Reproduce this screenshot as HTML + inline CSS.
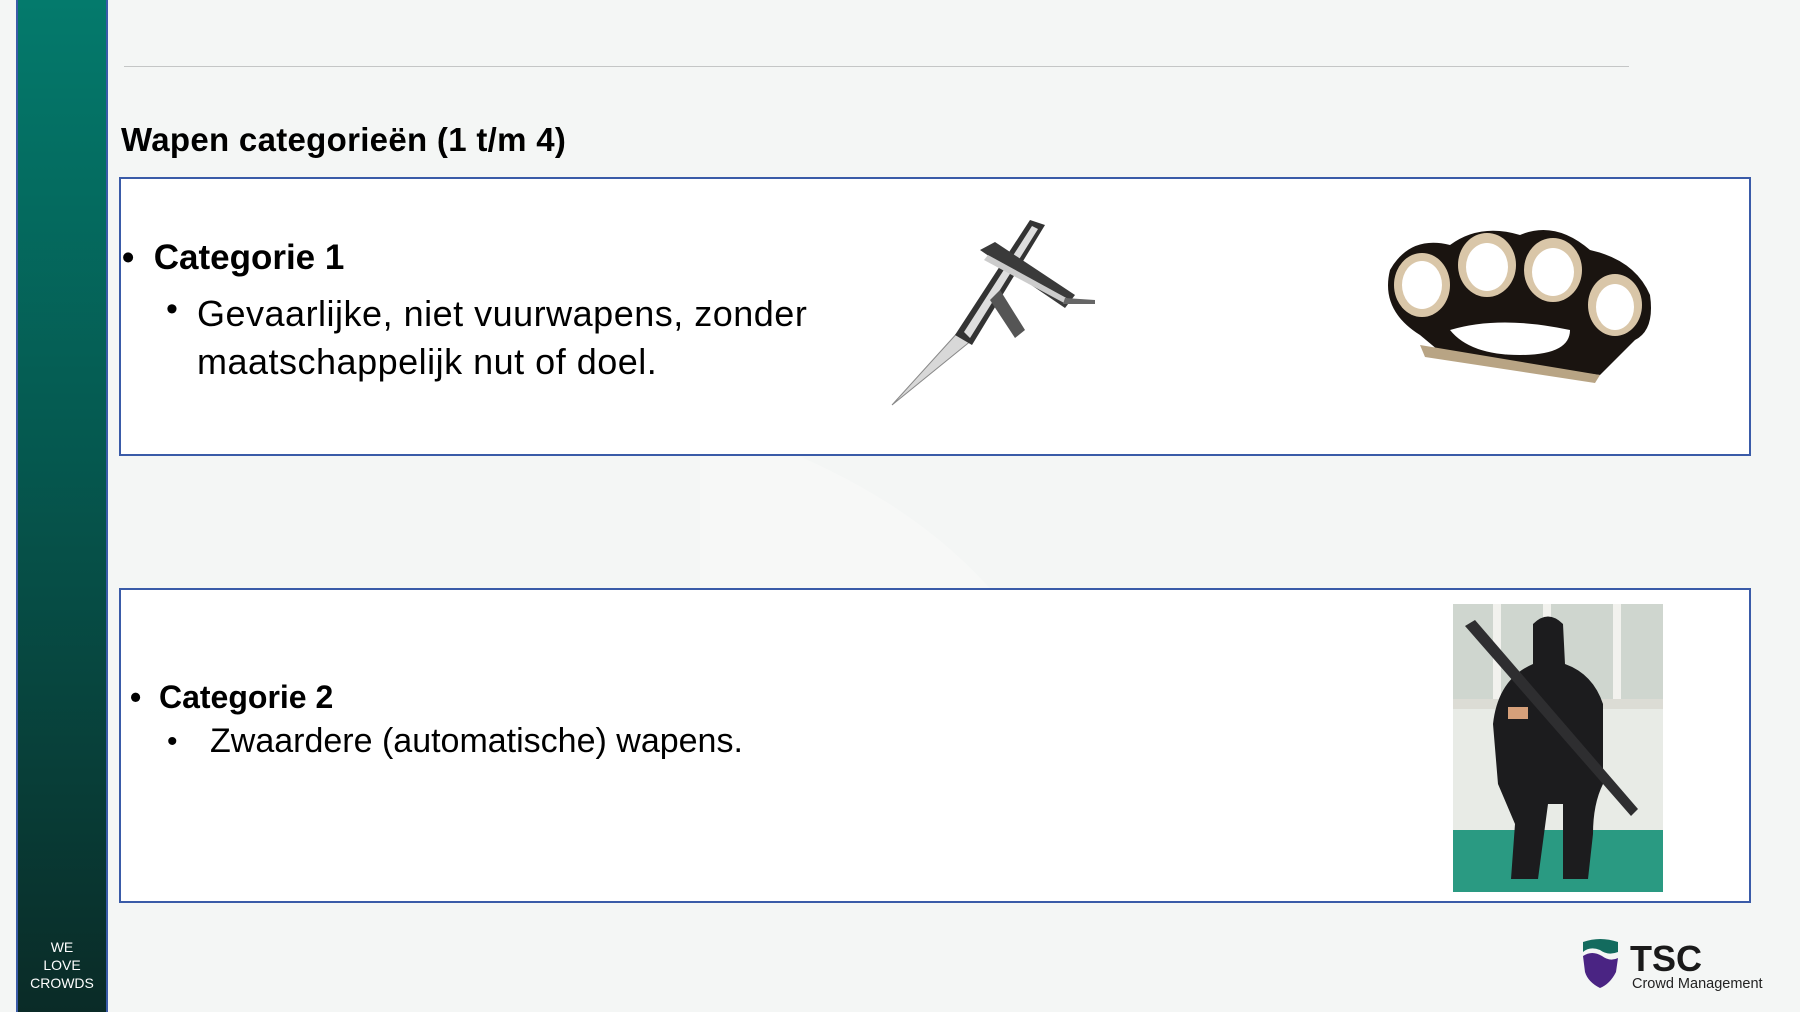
<!DOCTYPE html>
<html><head><meta charset="utf-8"><style>
*{margin:0;padding:0;box-sizing:border-box}
body{width:1800px;height:1012px;overflow:hidden;background:#f4f6f5;position:relative;font-family:"Liberation Sans",sans-serif;color:#000}
.abs{position:absolute}
.bar{left:16px;top:0;width:92px;height:1012px;background:linear-gradient(#047a6c,#05584f 45%,#0a2b27 100%);border-left:2px solid #3a5ba8;border-right:2px solid #3a5ba8}
.wlc{left:16px;width:92px;top:938px;color:#fff;font-size:14px;line-height:18px;text-align:center}
.box{left:119px;width:1632px;border:2px solid #3a5ba8;background:#fff}
.t{white-space:nowrap;line-height:1}
</style></head><body>
<svg class="abs" style="left:0;top:0" width="1800" height="1012"><path d="M700 420 Q900 480 1000 600 L700 600Z" fill="#f7f8f7"/></svg>
<div class="abs bar"></div>
<div class="abs wlc">WE<br>LOVE<br>CROWDS</div>
<div class="abs" style="left:124px;top:66px;width:1505px;height:1px;background:#c4c6c6"></div>
<div class="abs t" style="left:121px;top:123px;font-size:33px;font-weight:bold;letter-spacing:0.3px">Wapen categorieën (1 t/m 4)</div>
<div class="abs box" style="top:177px;height:279px"></div>
<div class="abs box" style="top:588px;height:315px"></div>

<div class="abs t" style="left:122px;top:240px;font-size:35px;font-weight:bold">•&nbsp;&nbsp;Categorie 1</div>
<div class="abs t" style="left:166px;top:292px;font-size:34px">•</div>
<div class="abs t" style="left:197px;top:290px;font-size:36px;letter-spacing:0.5px;line-height:48px">Gevaarlijke, niet vuurwapens, zonder<br>maatschappelijk nut of doel.</div>

<div class="abs t" style="left:130px;top:681px;font-size:32px;font-weight:bold">•&nbsp;&nbsp;Categorie 2</div>
<div class="abs t" style="left:167px;top:727px;font-size:30px">•</div>
<div class="abs t" style="left:210px;top:724px;font-size:34px">Zwaardere (automatische) wapens.</div>

<!-- knife -->
<svg class="abs" style="left:880px;top:200px" width="320" height="220">
<path d="M12 205 L80 130 L92 140 Z" fill="#d8d8d8" stroke="#888" stroke-width="1"/>
<path d="M75 135 L150 20 L165 25 L92 145 Z" fill="#333"/>
<path d="M84 132 L152 26 L158 29 L90 138 Z" fill="#ddd"/>
<path d="M100 50 L115 42 L195 95 L185 108 Z" fill="#3a3a3a"/>
<path d="M108 55 L190 100 L186 104 L104 60 Z" fill="#ccc"/>
<path d="M120 90 L145 130 L135 138 L110 100Z" fill="#555"/>
<path d="M185 98 L215 100 L215 104 L183 104Z" fill="#666"/>
</svg>
<!-- knuckles -->
<svg class="abs" style="left:1370px;top:215px" width="300" height="180">
<path d="M20 55 Q40 20 80 30 Q110 8 150 20 Q185 5 220 35 Q265 45 280 80 Q285 115 265 125 L230 160 Q150 150 80 145 L50 120 Q10 95 20 55Z" fill="#1a1410"/>
<ellipse cx="52" cy="70" rx="28" ry="32" fill="#d9c6a8"/><ellipse cx="52" cy="70" rx="20" ry="24" fill="#fff"/>
<ellipse cx="117" cy="50" rx="29" ry="32" fill="#d9c6a8"/><ellipse cx="117" cy="52" rx="21" ry="24" fill="#fff"/>
<ellipse cx="183" cy="55" rx="29" ry="32" fill="#d9c6a8"/><ellipse cx="183" cy="57" rx="21" ry="24" fill="#fff"/>
<ellipse cx="245" cy="90" rx="27" ry="31" fill="#d9c6a8"/><ellipse cx="245" cy="92" rx="19" ry="23" fill="#fff"/>
<path d="M80 115 Q130 100 200 115 Q200 140 150 140 Q100 140 80 115Z" fill="#fff"/>
<path d="M50 130 L230 160 L225 168 L55 142Z" fill="#b8a484"/>
</svg>
<!-- soldier photo -->
<svg class="abs" style="left:1453px;top:604px" width="210" height="288">
<rect width="210" height="288" fill="#e8ebe6"/>
<rect x="0" y="0" width="210" height="100" fill="#cfd6cf"/>
<rect x="40" y="0" width="8" height="100" fill="#f2f2ee"/><rect x="90" y="0" width="8" height="100" fill="#f2f2ee"/><rect x="160" y="0" width="8" height="100" fill="#f2f2ee"/>
<rect x="0" y="95" width="210" height="10" fill="#dcdcd5"/>
<rect x="0" y="226" width="210" height="62" fill="#2a9a82"/>
<path d="M80 20 Q95 5 110 20 L112 60 Q140 70 150 100 L150 180 Q140 200 140 230 L135 275 L110 275 L110 200 L95 200 L85 275 L58 275 L62 220 L45 180 L40 120 Q45 75 80 60Z" fill="#1c1c1e"/>
<path d="M12 22 L22 16 L185 205 L178 212Z" fill="#2e2e30"/>
<rect x="55" y="103" width="20" height="12" fill="#d6a07a"/>
</svg>
<!-- logo -->
<svg class="abs" style="left:1580px;top:938px" width="220" height="62">
<path d="M3 4 Q20 -2 38 4 L38 14 Q28 18 20 12 Q10 8 3 14Z" fill="#136b5e"/>
<path d="M3 18 Q12 12 22 18 Q30 24 38 20 L36 34 Q30 46 20 50 Q8 44 5 34Z" fill="#4a2483"/>
<text x="50" y="33" font-family="Liberation Sans" font-weight="bold" font-size="36" fill="#1a1a1a">TSC</text>
<text x="52" y="50" font-family="Liberation Sans" font-size="14.5" fill="#222">Crowd Management</text>
</svg>
</body></html>
